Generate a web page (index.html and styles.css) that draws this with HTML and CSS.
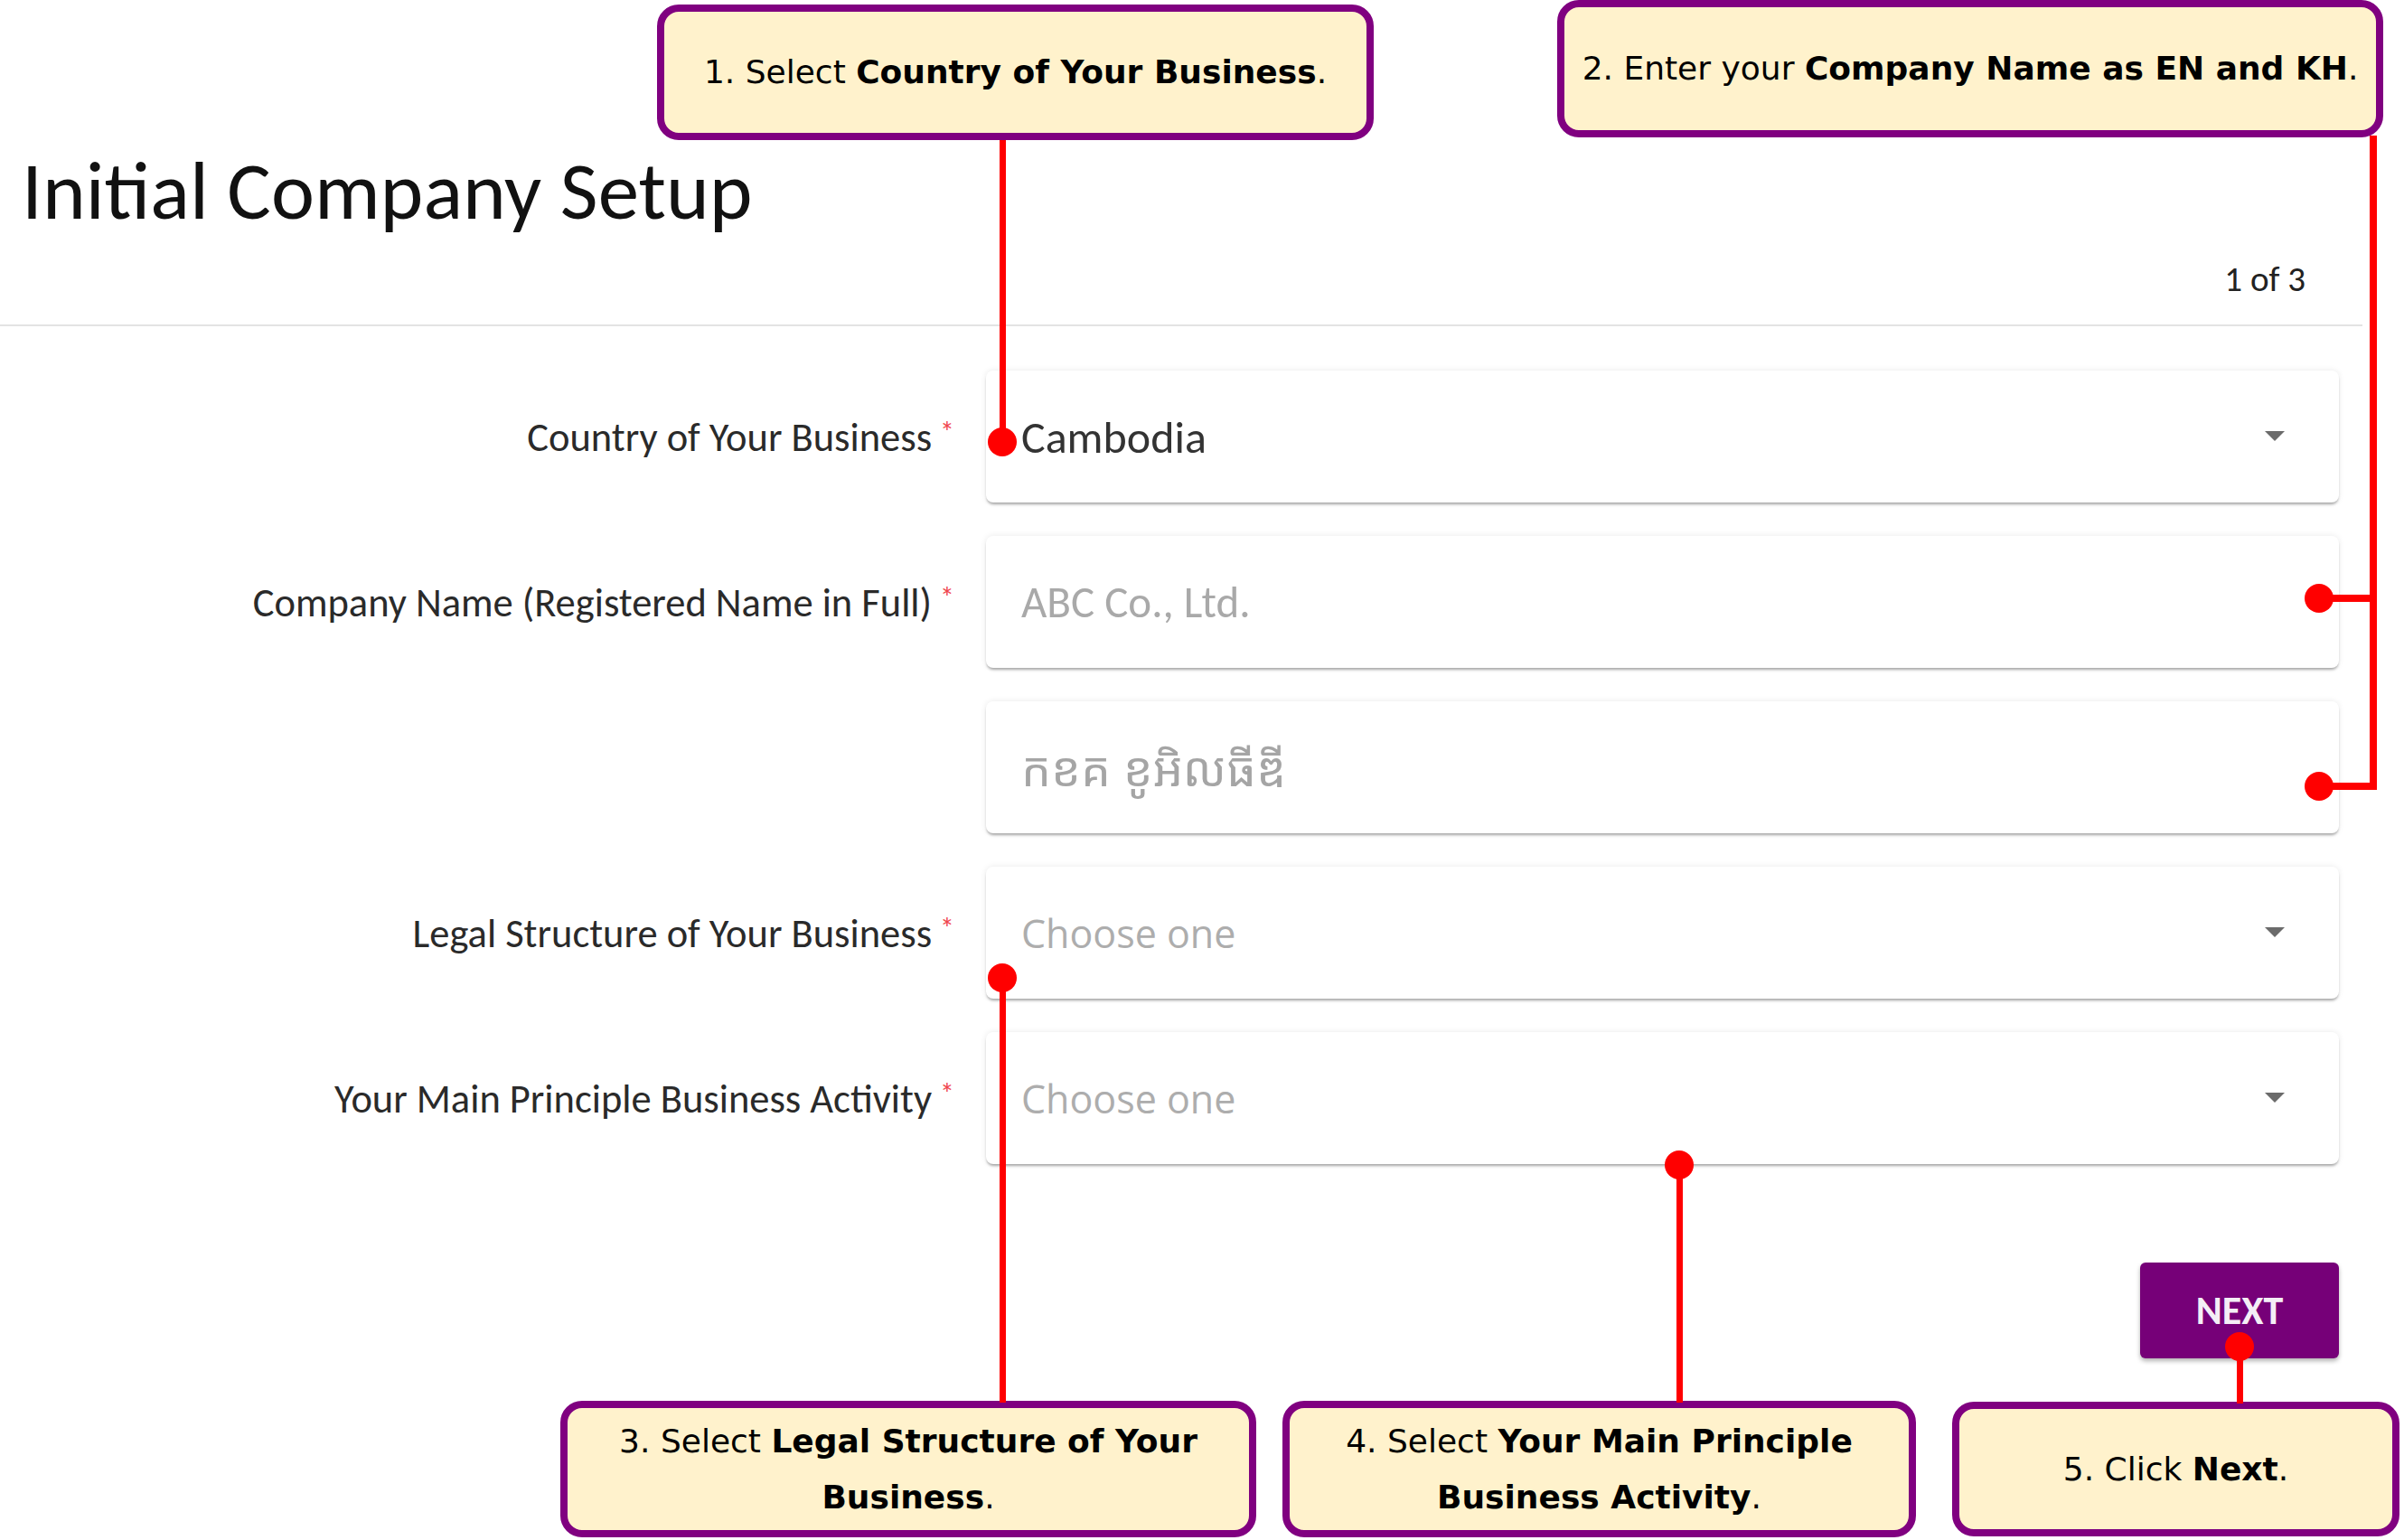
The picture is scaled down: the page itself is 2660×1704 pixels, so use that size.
FILE: index.html
```html
<!DOCTYPE html>
<html lang="en">
<head>
<meta charset="utf-8">
<title>Initial Company Setup</title>
<link rel="stylesheet" href="styles.css">
</head>
<body>
<div class="page">
  <header class="header">
    <h1 class="title">Initial Company Setup</h1>
    <div class="step">1 of 3</div>
  </header>

  <form class="form">
    <div class="row">
      <label class="label">Country of Your Business<span class="req">*</span></label>
      <div class="field select"><span class="value">Cambodia</span><span class="caret"></span></div>
    </div>
    <div class="row">
      <label class="label">Company Name (Registered Name in Full)<span class="req">*</span></label>
      <div class="field"><span class="placeholder">ABC Co., Ltd.</span></div>
    </div>
    <div class="row">
      <span class="label"></span>
      <div class="field"><span class="placeholder khmer">កខគ ខូអិលធីឌី</span></div>
    </div>
    <div class="row">
      <label class="label">Legal Structure of Your Business<span class="req">*</span></label>
      <div class="field select"><span class="placeholder choose">Choose one</span><span class="caret"></span></div>
    </div>
    <div class="row">
      <label class="label">Your Main Principle Business Activity<span class="req">*</span></label>
      <div class="field select"><span class="placeholder choose">Choose one</span><span class="caret"></span></div>
    </div>
    <div class="actions">
      <button type="button" class="next">NEXT</button>
    </div>
  </form>

  <!-- annotation overlay -->
  <div class="callout c1"><p>1. Select <b>Country of Your Business</b>.</p></div>
  <div class="callout c2"><p>2. Enter your <b>Company Name as EN and KH</b>.</p></div>
  <div class="callout c3"><p>3. Select <b>Legal Structure of Your<br>Business</b>.</p></div>
  <div class="callout c4"><p>4. Select <b>Your Main Principle<br>Business Activity</b>.</p></div>
  <div class="callout c5"><p>5. Click <b>Next</b>.</p></div>

  <div class="line l1"></div>
  <div class="dot d1"></div>
  <div class="line l2v"></div>
  <div class="line l2a"></div>
  <div class="line l2b"></div>
  <div class="dot d2a"></div>
  <div class="dot d2b"></div>
  <div class="line l3"></div>
  <div class="dot d3"></div>
  <div class="line l4"></div>
  <div class="dot d4"></div>
  <div class="line l5"></div>
  <div class="dot d5"></div>
</div>
</body>
</html>
```

FILE: styles.css
```css
* { box-sizing: border-box; }
html, body { margin: 0; padding: 0; background: #ffffff; }
body { font-family: "Carlito", "Lato", "Noto Sans", sans-serif; color: #222; }

.page { position: relative; width: 2660px; height: 1704px; overflow: hidden; }

.header {
  width: 2614px;
  padding-top: 161px;
  border-bottom: 2px solid #e3e3e3;
  height: 361px;
}
.title {
  margin: 0;
  padding-left: 24px;
  font-weight: 400;
  font-size: 91px;
  line-height: 100px;
  color: #111;
}
.step {
  text-align: right;
  padding-right: 63px;
  margin-top: 23px;
  font-size: 39px;
  line-height: 50px;
  color: #222;
}

.form {
  padding-top: 49px;
  display: flex;
  flex-direction: column;
  gap: 37px;
}
.row {
  display: grid;
  grid-template-columns: 1056px 1497px;
  column-gap: 35px;
  align-items: center;
}
.label {
  text-align: right;
  font-size: 44.5px;
  line-height: 50px;
  color: #2a2a2a;
  white-space: nowrap;
  margin-top: -4px;
}
.req {
  color: #f0464f;
  font-size: 32px;
  vertical-align: 10px;
  margin-left: 9px;
}
.field {
  height: 146px;
  background: #fff;
  border-radius: 8px;
  box-shadow: 0 3px 3px -1px rgba(0,0,0,0.32), 0 0 7px rgba(0,0,0,0.09);
  display: flex;
  align-items: center;
  padding: 0 0 0 39px;
  position: relative;
}
.value { font-size: 50px; color: #333; }
.placeholder { font-size: 49px; color: #a9a9a9; }
.choose { font-family: "Open Sans", sans-serif; font-size: 43px; color: #adadad; }
.khmer { font-family: "Noto Sans Khmer", "Khmer OS", "Noto Serif Khmer", sans-serif; font-size: 52px; color: #a5a5a5; }
.caret {
  position: absolute;
  right: 60px;
  top: 67px;
  width: 0; height: 0;
  border-left: 11px solid transparent;
  border-right: 11px solid transparent;
  border-top: 11px solid #6b6b6b;
}

.actions {
  display: flex;
  justify-content: flex-end;
  width: 2588px;
  margin-top: 72px;
}
.next {
  width: 220px;
  height: 106px;
  border: none;
  border-radius: 6px;
  background: #760078;
  color: #f4eef6;
  font-family: "Carlito", "Lato", sans-serif;
  font-size: 44px;
  font-weight: 700;
  padding: 0;
  box-shadow: 0 3px 5px rgba(0,0,0,0.3);
}

/* annotations */
.callout {
  position: absolute;
  background: #fff2cc;
  border: 8px solid #800080;
  border-radius: 24px;
  font-family: "DejaVu Sans", sans-serif;
  font-size: 36px;
  line-height: 62px;
  color: #000;
  display: flex;
  align-items: center;
  justify-content: center;
}
.callout p { margin: 0; text-align: center; }
.callout b { font-weight: 700; }
.c1 { left: 727px; top: 5px; width: 793px; height: 150px; }
.c2 { left: 1723px; top: 0px; width: 914px; height: 152px; }
.c3 { left: 620px; top: 1550px; width: 770px; height: 151px; }
.c4 { left: 1419px; top: 1550px; width: 701px; height: 151px; }
.c5 { left: 2160px; top: 1551px; width: 495px; height: 149px; }

.line { position: absolute; background: #ff0000; }
.dot { position: absolute; width: 32px; height: 32px; border-radius: 50%; background: #ff0000; }
.l1 { left: 1106px; top: 155px; width: 7px; height: 334px; }
.d1 { left: 1093px; top: 473px; }
.l2v { left: 2622px; top: 150px; width: 8px; height: 724px; }
.l2a { left: 2566px; top: 658px; width: 64px; height: 8px; }
.l2b { left: 2566px; top: 866px; width: 64px; height: 8px; }
.d2a { left: 2550px; top: 646px; }
.d2b { left: 2550px; top: 854px; }
.l3 { left: 1106px; top: 1082px; width: 7px; height: 470px; }
.d3 { left: 1093px; top: 1066px; }
.l4 { left: 1855px; top: 1289px; width: 7px; height: 263px; }
.d4 { left: 1842px; top: 1273px; }
.l5 { left: 2475px; top: 1490px; width: 7px; height: 63px; }
.d5 { left: 2462px; top: 1474px; }
```
